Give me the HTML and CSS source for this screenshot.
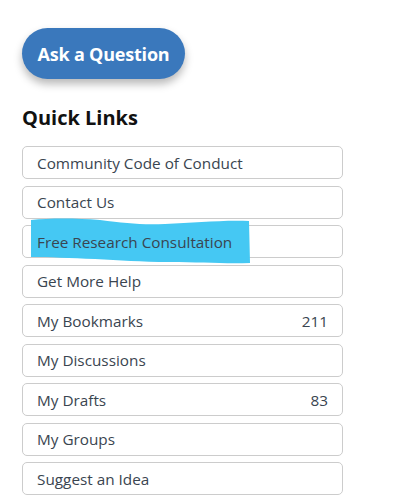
FILE: index.html
```html
<!DOCTYPE html>
<html>
<head>
<meta charset="utf-8">
<link rel="stylesheet" href="styles.css">
</head>
<body>
<div class="side">
  <a class="ask-btn">Ask a Question</a>
  <h2 class="ql-title">Quick Links</h2>
  <ul class="ql-list">
    <li class="ql-item"><span class="ql-label">Community Code of Conduct</span></li>
    <li class="ql-item"><span class="ql-label">Contact Us</span></li>
    <li class="ql-item">
      <svg class="scribble" width="222" height="50" viewBox="0 0 222 50"><path d="M1,4 C20,2 45,2 70,4 C95,7 110,9 135,8 C165,7 190,4 219,5 L220,47 C195,48 170,46 140,46 C110,46 90,44 65,43 C40,42 20,41 1,41 Z" fill="#45c8f3"/></svg>
      <span class="ql-label">Free Research Consultation</span>
    </li>
    <li class="ql-item"><span class="ql-label">Get More Help</span></li>
    <li class="ql-item"><span class="ql-label">My Bookmarks</span><span class="ql-count">211</span></li>
    <li class="ql-item"><span class="ql-label">My Discussions</span></li>
    <li class="ql-item"><span class="ql-label">My Drafts</span><span class="ql-count">83</span></li>
    <li class="ql-item"><span class="ql-label">My Groups</span></li>
    <li class="ql-item"><span class="ql-label">Suggest an Idea</span></li>
  </ul>
</div>
</body>
</html>
```

FILE: styles.css
```css
html, body {
  margin: 0;
  padding: 0;
  background: #ffffff;
}
body {
  font-family: "Open Sans", "Liberation Sans", sans-serif;
  color: #3a4550;
}
.side {
  padding: 28px 0 0 22px;
  width: 321px;
}
.ask-btn {
  display: inline-flex;
  align-items: center;
  justify-content: center;
  height: 51px;
  width: 163px;
  border-radius: 26px;
  background: #3a78bc;
  color: #ffffff;
  font-weight: 700;
  font-size: 18px;
  box-shadow: 0 5px 9px rgba(0, 0, 0, 0.28);
  letter-spacing: -0.2px;
}
.ql-title {
  margin: 26px 0 0 0;
  font-size: 20px;
  font-weight: 700;
  color: #111111;
  line-height: 26px;
}
.ql-list {
  list-style: none;
  margin: 15px 0 0 0;
  padding: 0;
  display: flex;
  flex-direction: column;
  gap: 6.5px;
}
.ql-item {
  position: relative;
  height: 31px;
  border: 1px solid #cccccc;
  border-radius: 5px;
  display: flex;
  align-items: center;
  justify-content: space-between;
  padding: 0 14px;
  font-size: 15.3px;
}
.ql-label, .ql-count {
  position: relative;
  z-index: 1;
}
.scribble {
  position: absolute;
  left: 7px;
  top: -10px;
  z-index: 0;
}
```
